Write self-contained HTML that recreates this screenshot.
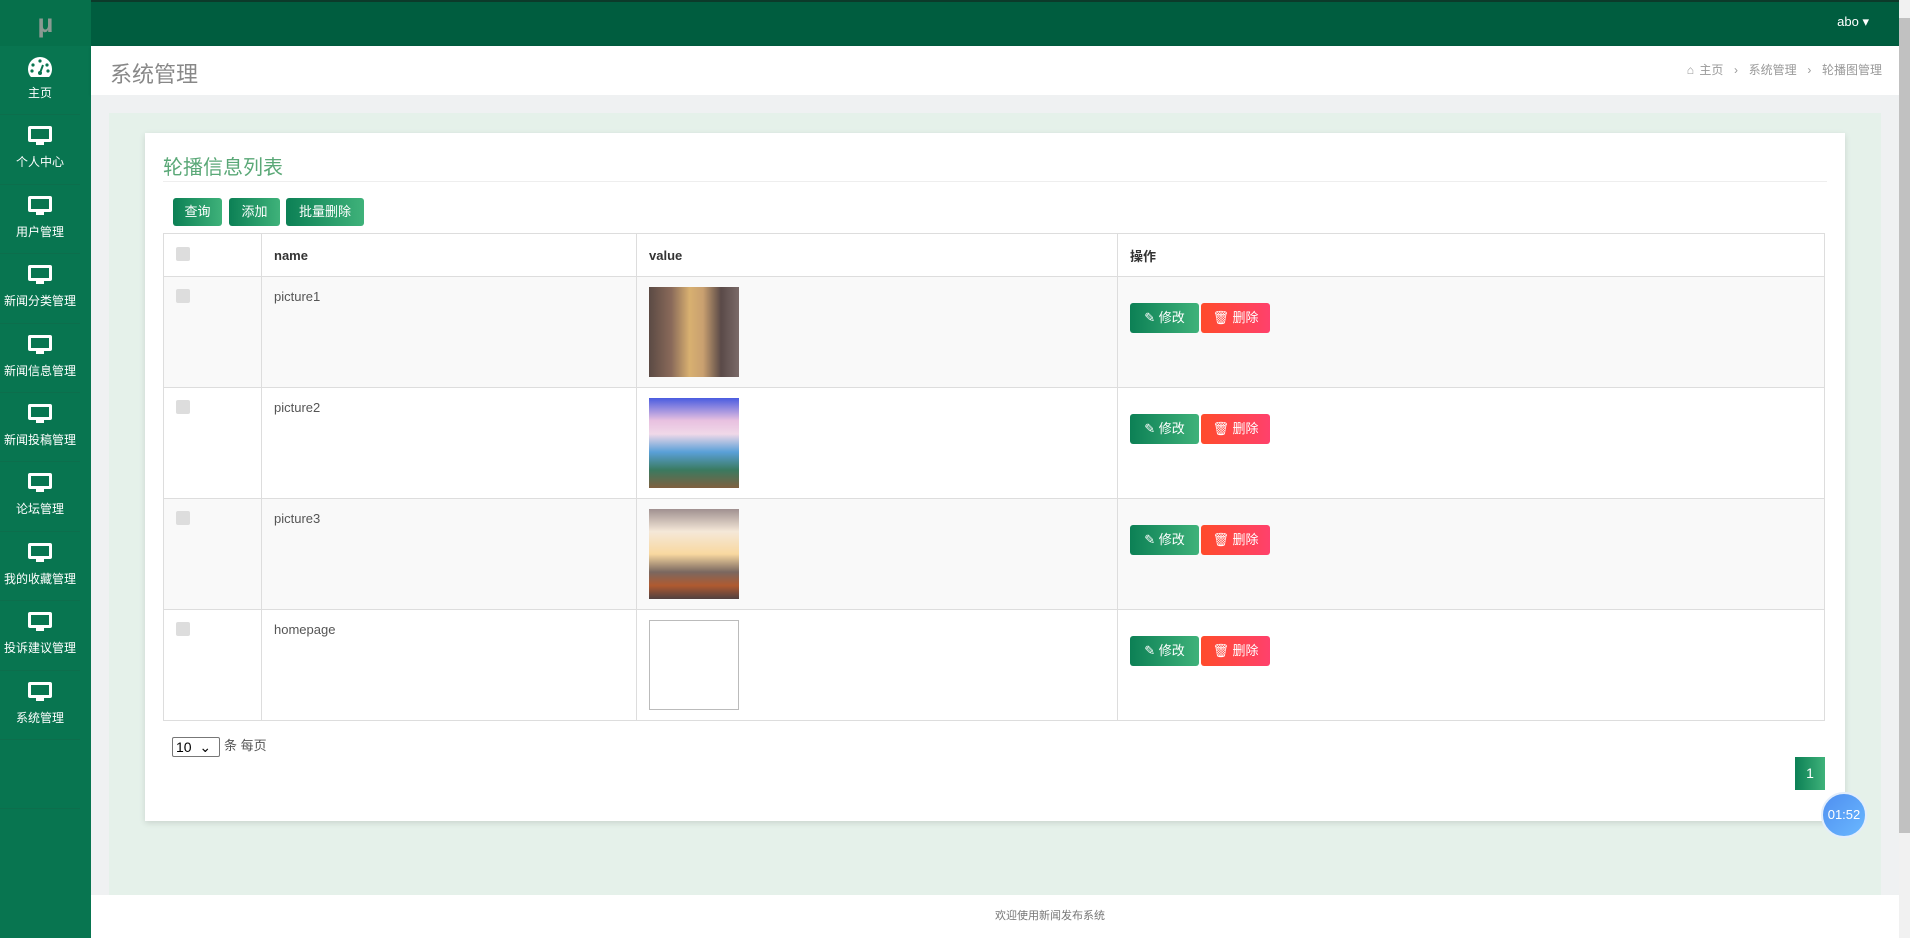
<!DOCTYPE html>
<html><head><meta charset="utf-8"><style>
*{box-sizing:border-box;margin:0;padding:0}
body{width:1910px;height:938px;overflow:hidden;font-family:"Liberation Sans","Noto Sans CJK SC",sans-serif;background:#fff;position:relative;font-size:13px;color:#555}
.top{position:absolute;left:0;top:0;width:1899px;height:46px;background:#005d3f;border-top:2px solid #0c3a2a}
.logo{position:absolute;left:0;top:0;width:91px;height:46px;background:#06704b;color:#8a9a92;font-size:26px;font-weight:bold;text-align:center;line-height:46px}
.user{position:absolute;right:30px;top:12px;color:#fff;font-size:13px}
.side{position:absolute;left:0;top:46px;width:91px;height:892px;background:#087550}
.item{height:69.4px;border-bottom:1px solid #0d6e4c;text-align:center;color:#fff;font-size:12px;padding-top:10px;width:80px;margin-left:0}
.item svg{display:block;margin:0 auto 6px}
.ph{position:absolute;left:91px;top:46px;width:1808px;height:49px;background:#fff;box-shadow:0 1px 3px rgba(0,0,0,.12)}
.ph h1{position:absolute;left:19px;top:11px;font-size:22px;font-weight:normal;color:#888}
.bc{position:absolute;right:17px;top:15px;font-size:12px;color:#999;word-spacing:2px}
.content{position:absolute;left:91px;top:95px;width:1808px;height:800px;background:#eff1f2}
.inner{position:absolute;left:18px;top:18px;width:1772px;height:782px;background:#e5f1ea}
.card{position:absolute;left:145px;top:133px;width:1700px;height:688px;background:#fff;box-shadow:0 2px 6px rgba(0,0,0,.12)}
.card h2{position:absolute;left:18px;top:18px;font-size:20px;font-weight:normal;color:#5aa877}
.hr{position:absolute;left:18px;right:18px;top:48px;border-top:1px solid #eee}
.btn{position:absolute;top:65px;height:28px;color:#fff;font-size:13px;line-height:28px;text-align:center;border-radius:3px;background:linear-gradient(90deg,#0c8055,#3fb27a)}
table{position:absolute;left:18px;top:100px;width:1662px;border-collapse:collapse}
td,th{border:1px solid #ddd;text-align:left;vertical-align:top;font-size:13px}
th{height:43px;vertical-align:middle;padding-left:12px;color:#333;font-weight:bold}
td{height:111px;padding:12px 0 0 12px;color:#555}
tr.g td{background:#f9f9f9}
.cb{display:inline-block;width:14px;height:14px;background:#ddd;border-radius:2px}
.img{width:90px;height:90px;margin-top:-2px}
.ab{display:inline-block;height:30px;line-height:30px;color:#fff;font-size:13px;border-radius:3px;width:69px;text-align:center;margin-top:14px}
.ed{background:linear-gradient(90deg,#0c8055,#3fb27a)}
.dl{background:linear-gradient(90deg,#ff4b2b,#ff416c);margin-left:2px}
.sel{position:absolute;left:27px;top:602px;font-size:13px;color:#555}
.sel span.s{display:inline-block;width:48px;height:20px;border:1px solid #777;border-radius:2px;color:#000;font-size:14px;padding-left:3px;line-height:18px;vertical-align:middle;margin-right:4px}
.pg{position:absolute;left:1650px;top:624px;width:30px;height:33px;background:linear-gradient(90deg,#0c8055,#3fb27a);color:#fff;text-align:center;line-height:33px;font-size:14px}
.timer{position:absolute;left:1821px;top:792px;width:46px;height:46px;border-radius:50%;background:linear-gradient(135deg,#4f8ff0,#6ab8ff);border:2px solid #e3eefb;color:#fff;font-size:13px;text-align:center;line-height:42px}
.foot{position:absolute;left:91px;top:895px;width:1808px;height:43px;background:#fff;text-align:center;line-height:43px;font-size:11px;color:#777;padding-left:110px}
.sb{position:absolute;left:1899px;top:0;width:11px;height:938px;background:#f1f1f1}
.th{position:absolute;left:1899px;top:18px;width:11px;height:815px;background:#c1c1c1}
</style></head><body>
<div class="top"><div class="user">abo ▾</div></div>
<div class="logo">μ</div>
<div class="side">
<div class="item"><svg width="26" height="22" viewBox="0 0 26 22"><path d="M13 1A12 12 0 0 0 1 13c0 3 1 6 3 8h18c2-2 3-5 3-8A12 12 0 0 0 13 1z" fill="#fff"/><circle cx="13" cy="5" r="1.6" fill="#087550"/><circle cx="6" cy="9" r="1.6" fill="#087550"/><circle cx="20" cy="9" r="1.6" fill="#087550"/><circle cx="5" cy="15" r="1.6" fill="#087550"/><circle cx="21" cy="15" r="1.6" fill="#087550"/><path d="M13 17l3-8" stroke="#087550" stroke-width="2"/><circle cx="13" cy="17" r="2" fill="#087550"/></svg>主页</div>
<div class="item"><svg width="26" height="22" viewBox="0 0 26 22"><rect x="1" y="1" width="24" height="16" rx="2" fill="#fff"/><rect x="4" y="4" width="18" height="10" fill="#087550"/><rect x="9" y="17" width="8" height="3" fill="#fff"/></svg>个人中心</div>
<div class="item"><svg width="26" height="22" viewBox="0 0 26 22"><rect x="1" y="1" width="24" height="16" rx="2" fill="#fff"/><rect x="4" y="4" width="18" height="10" fill="#087550"/><rect x="9" y="17" width="8" height="3" fill="#fff"/></svg>用户管理</div>
<div class="item"><svg width="26" height="22" viewBox="0 0 26 22"><rect x="1" y="1" width="24" height="16" rx="2" fill="#fff"/><rect x="4" y="4" width="18" height="10" fill="#087550"/><rect x="9" y="17" width="8" height="3" fill="#fff"/></svg>新闻分类管理</div>
<div class="item"><svg width="26" height="22" viewBox="0 0 26 22"><rect x="1" y="1" width="24" height="16" rx="2" fill="#fff"/><rect x="4" y="4" width="18" height="10" fill="#087550"/><rect x="9" y="17" width="8" height="3" fill="#fff"/></svg>新闻信息管理</div>
<div class="item"><svg width="26" height="22" viewBox="0 0 26 22"><rect x="1" y="1" width="24" height="16" rx="2" fill="#fff"/><rect x="4" y="4" width="18" height="10" fill="#087550"/><rect x="9" y="17" width="8" height="3" fill="#fff"/></svg>新闻投稿管理</div>
<div class="item"><svg width="26" height="22" viewBox="0 0 26 22"><rect x="1" y="1" width="24" height="16" rx="2" fill="#fff"/><rect x="4" y="4" width="18" height="10" fill="#087550"/><rect x="9" y="17" width="8" height="3" fill="#fff"/></svg>论坛管理</div>
<div class="item"><svg width="26" height="22" viewBox="0 0 26 22"><rect x="1" y="1" width="24" height="16" rx="2" fill="#fff"/><rect x="4" y="4" width="18" height="10" fill="#087550"/><rect x="9" y="17" width="8" height="3" fill="#fff"/></svg>我的收藏管理</div>
<div class="item"><svg width="26" height="22" viewBox="0 0 26 22"><rect x="1" y="1" width="24" height="16" rx="2" fill="#fff"/><rect x="4" y="4" width="18" height="10" fill="#087550"/><rect x="9" y="17" width="8" height="3" fill="#fff"/></svg>投诉建议管理</div>
<div class="item"><svg width="26" height="22" viewBox="0 0 26 22"><rect x="1" y="1" width="24" height="16" rx="2" fill="#fff"/><rect x="4" y="4" width="18" height="10" fill="#087550"/><rect x="9" y="17" width="8" height="3" fill="#fff"/></svg>系统管理</div>
<div class="item"></div>
</div>
<div class="ph"><h1>系统管理</h1><div class="bc">⌂ 主页 &nbsp;› &nbsp;系统管理 &nbsp;› &nbsp;轮播图管理</div></div>
<div class="content"><div class="inner"></div></div>
<div class="card">
<h2>轮播信息列表</h2><div class="hr"></div>
<div class="btn" style="left:28px;width:49px">查询</div>
<div class="btn" style="left:84px;width:51px">添加</div>
<div class="btn" style="left:141px;width:78px">批量删除</div>
<table>
<tr><th style="width:98px"><span class="cb"></span></th><th style="width:375px">name</th><th style="width:481px">value</th><th>操作</th></tr>
<tr class="g"><td><span class="cb"></span></td><td>picture1</td><td><div class="img" style="background:linear-gradient(90deg,#5b4a44 0,#8a6a5a 25%,#d8b070 45%,#c9a070 60%,#5a4a48 80%,#7a6a68 100%)"></div></td><td><span class="ab ed">✎ 修改</span><span class="ab dl">🗑 删除</span></td></tr>
<tr><td><span class="cb"></span></td><td>picture2</td><td><div class="img" style="background:linear-gradient(180deg,#4a5ce0 0,#e8c0e0 25%,#f0d8e8 40%,#5aa0d8 60%,#3a7a60 80%,#806040 100%)"></div></td><td><span class="ab ed">✎ 修改</span><span class="ab dl">🗑 删除</span></td></tr>
<tr class="g"><td><span class="cb"></span></td><td>picture3</td><td><div class="img" style="background:linear-gradient(180deg,#a09090 0,#f5e8d8 25%,#f8d8a0 50%,#7a6860 70%,#b05a30 85%,#504040 100%)"></div></td><td><span class="ab ed">✎ 修改</span><span class="ab dl">🗑 删除</span></td></tr>
<tr><td><span class="cb"></span></td><td>homepage</td><td><div class="img" style="border:1px solid #bbb"></div></td><td><span class="ab ed">✎ 修改</span><span class="ab dl">🗑 删除</span></td></tr>
</table>
<div class="sel"><span class="s">10 &nbsp;⌄</span>条 每页</div>
<div class="pg">1</div>
</div>
<div class="timer">01:52</div>
<div class="foot">欢迎使用新闻发布系统</div>
<div class="sb"></div><div class="th"></div>
</body></html>
